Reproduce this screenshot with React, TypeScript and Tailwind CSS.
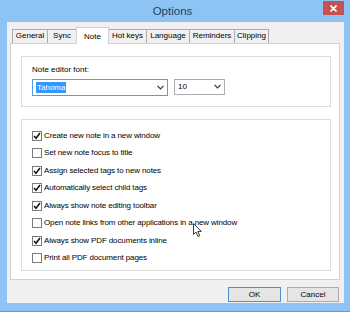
import React from "react";

const font = { fontFamily: '"Liberation Sans", Arial, sans-serif' };

const tabs = [
  { label: "General", w: 35 },
  { label: "Sync", w: 29 },
  { label: "Note", w: 32, active: true },
  { label: "Hot keys", w: 38 },
  { label: "Language", w: 43 },
  { label: "Reminders", w: 45 },
  { label: "Clipping", w: 34 },
];

const options = [
  { label: "Create new note in a new window", checked: true },
  { label: "Set new note focus to title", checked: false },
  { label: "Assign selected tags to new notes", checked: true },
  { label: "Automatically select child tags", checked: true },
  { label: "Always show note editing toolbar", checked: true },
  { label: "Open note links from other applications in a new window", checked: false },
  { label: "Always show PDF documents inline", checked: true },
  { label: "Print all PDF document pages", checked: false },
];

function Chevron() {
  return (
    <svg width="7" height="5" viewBox="0 0 7 5">
      <path d="M0.5 0.8 L3.5 3.8 L6.5 0.8" fill="none" stroke="#333" strokeWidth="1.2" />
    </svg>
  );
}

function Checkbox({ checked }: { checked: boolean }) {
  return (
    <div className="w-[10px] h-[10px] border border-[#7a7a7a] bg-white flex items-center justify-center shrink-0">
      {checked && (
        <svg width="8" height="8" viewBox="0 0 8 8">
          <path d="M1 4 L3 6.3 L7 1" fill="none" stroke="#111" strokeWidth="1.5" />
        </svg>
      )}
    </div>
  );
}

function Cursor() {
  return (
    <svg className="absolute left-[193px] top-[223px]" width="10" height="15" viewBox="0 0 10 15">
      <path d="M0.5 0.5 L0.5 11.5 L3 9 L5 13.5 L6.8 12.7 L4.8 8.4 L8.3 8.4 Z" fill="#fff" stroke="#222" strokeWidth="0.9" />
    </svg>
  );
}

export default function App() {
  return (
    <div className="relative w-[350px] h-[312px] bg-[#8dc4f4] flex flex-col overflow-hidden" style={font}>
      <div className="h-[22px] flex items-start">
        <div className="flex-1 flex justify-center pt-[3px] pl-[22px] text-[11.5px] text-[#223f60]">Options</div>
        <div className="w-[21px] h-[14px] mt-[1px] mr-[6px] bg-[#c75050] flex items-center justify-center">
          <svg width="7" height="7" viewBox="0 0 7 7">
            <path d="M0.5 0.5 L6.5 6.5 M6.5 0.5 L0.5 6.5" stroke="#fff" strokeWidth="1.6" />
          </svg>
        </div>
      </div>
      <div className="ml-[7px] mr-[6px] h-[281px] bg-[#f0f0f0] flex flex-col pl-[3px] pr-[4px] pt-[4px] border-b border-[#f0f0f0]">
        <div className="flex items-end h-[17px] pl-[2px] text-[8px] text-black">
          {tabs.map((t) =>
            t.active ? (
              <div
                key={t.label}
                className="h-[17px] -mb-[1px] -ml-[1px] bg-white border border-b-0 border-[#d0d0d0] flex items-start justify-center pt-[3px] relative z-10"
                style={{ width: t.w + 1 }}
              >
                {t.label}
              </div>
            ) : (
              <div
                key={t.label}
                className="h-[14px] -ml-[1px] first:ml-0 bg-[#f0f0f0] border border-b-0 border-[#acacac] flex items-center justify-center"
                style={{ width: t.w + 1 }}
              >
                {t.label}
              </div>
            )
          )}
        </div>
        <div className="w-[330px] h-[238px] bg-white border border-[#d0d0d0] flex flex-col px-[10px] pt-[12px] gap-[12px]">
          <div className="w-[310px] h-[51px] border border-[#dcdcdc] flex flex-col pl-[10px] pt-[8px] text-[8px]">
            <div className="h-[10px] leading-[10px]">Note editor font:</div>
            <div className="flex gap-[6px] mt-[4px]">
              <div className="w-[136px] h-[17px] border border-[#569de5] bg-white flex items-center pl-[3px] pr-[3px]">
                <span className="bg-[#3399ff] text-white px-[1px] leading-[11px]">Tahoma</span>
                <div className="flex-1" />
                <Chevron />
              </div>
              <div className="w-[51px] h-[16px] border border-[#acacac] bg-white flex items-center pl-[3px] pr-[3px]">
                <span>10</span>
                <div className="flex-1" />
                <Chevron />
              </div>
            </div>
          </div>
          <div className="w-[310px] h-[152px] border border-[#dcdcdc] flex flex-col pl-[10px] pt-[7px] text-[8px] tracking-[-0.12px]">
            {options.map((o) => (
              <div key={o.label} className="h-[17.5px] flex items-center gap-[2px]">
                <Checkbox checked={o.checked} />
                <span>{o.label}</span>
              </div>
            ))}
          </div>
        </div>
        <div className="flex justify-end gap-[6px] mt-[7px] pr-[1px] text-[8px]">
          <div className="w-[53px] h-[15px] border border-[#4a90d0] bg-[#e5e5e5] flex items-center justify-center">OK</div>
          <div className="w-[52px] h-[15px] border border-[#acacac] bg-[#e5e5e5] flex items-center justify-center">Cancel</div>
        </div>
      </div>
      <div className="flex-1 border-b border-[#6a9cc9]" />
      <Cursor />
    </div>
  );
}
